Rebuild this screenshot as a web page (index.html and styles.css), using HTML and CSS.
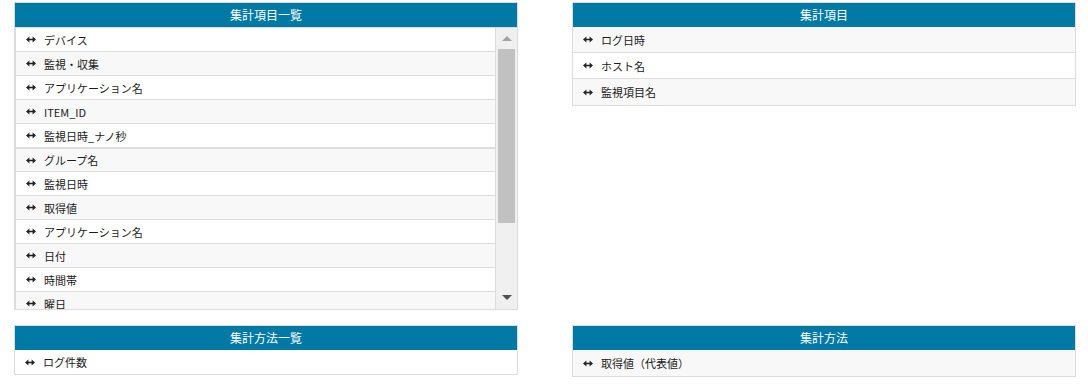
FILE: index.html
```html
<!DOCTYPE html>
<html lang="ja">
<head>
  <meta charset="UTF-8" />
  <title>集計設定</title>
  <link rel="stylesheet" href="styles.css">
</head>
<body>

  <div class="board">

    <!-- 集計項目一覧 -->
    <div class="panel">
      <div class="panel-head head-line">集計項目一覧</div>
      <div class="scroll-box">
        <ul class="item-list list-even">
          <li class="item"><span class="arrow"></span>デバイス</li>
          <li class="item"><span class="arrow"></span>監視・収集</li>
          <li class="item"><span class="arrow"></span>アプリケーション名</li>
          <li class="item"><span class="arrow"></span>ITEM_ID</li>
          <li class="item"><span class="arrow"></span>監視日時_ナノ秒</li>
          <li class="item sep"><span class="arrow"></span>グループ名</li>
          <li class="item"><span class="arrow"></span>監視日時</li>
          <li class="item"><span class="arrow"></span>取得値</li>
          <li class="item"><span class="arrow"></span>アプリケーション名</li>
          <li class="item"><span class="arrow"></span>日付</li>
          <li class="item"><span class="arrow"></span>時間帯</li>
          <li class="item"><span class="arrow"></span>曜日</li>
        </ul>
        <div class="scrollbar">
          <div class="sb-btn"><span class="sb-up"></span></div>
          <div class="sb-track"><div class="sb-thumb"></div></div>
          <div class="sb-btn sb-btn-down"><span class="sb-down"></span></div>
        </div>
      </div>
    </div>

    <!-- 集計項目 -->
    <div class="panel">
      <div class="panel-head">集計項目</div>
      <ul class="item-list list-odd tall">
        <li class="item"><span class="arrow"></span>ログ日時</li>
        <li class="item"><span class="arrow"></span>ホスト名</li>
        <li class="item"><span class="arrow"></span>監視項目名</li>
      </ul>
    </div>

    <!-- 集計方法一覧 -->
    <div class="panel">
      <div class="panel-head">集計方法一覧</div>
      <ul class="item-list list-even">
        <li class="item"><span class="arrow"></span>ログ件数</li>
      </ul>
    </div>

    <!-- 集計方法 -->
    <div class="panel">
      <div class="panel-head">集計方法</div>
      <ul class="item-list list-odd tall">
        <li class="item"><span class="arrow"></span>取得値（代表値）</li>
      </ul>
    </div>

  </div>

  <svg class="defs" width="0" height="0">
    <defs>
      <symbol id="lr" viewBox="0 0 10 7">
        <path d="M0 3.5 L3.4 0.4 V2.8 H6.6 V0.4 L10 3.5 L6.6 6.6 V4.2 H3.4 V6.6 Z" fill="#222"/>
      </symbol>
    </defs>
  </svg>

  <script>
    // 矢印アイコンを各行に入れる
    document.querySelectorAll('.arrow').forEach(el => {
      el.innerHTML = '<svg width="10" height="7"><use href="#lr"/></svg>';
    });
  </script>

</body>
</html>
```

FILE: styles.css
```css
body {
  margin: 0;
  padding: 2px 12px 0 14px;
  font-family: 'Noto Sans CJK JP', 'Noto Sans', sans-serif;
  background-color: #ffffff;
  color: #333;
}
.defs {
  display: block;
  height: 0;
}
.board {
  display: grid;
  grid-template-columns: 504px 504px;
  column-gap: 54px;
  row-gap: 15px;
  align-items: start;
}
.panel {
  border: 1px solid #dcdcdc;
  background: #fff;
}
.panel-head {
  height: 24px;
  line-height: 24px;
  background-color: #0079a5;
  color: #fff;
  text-align: center;
  font-size: 12px;
}
.head-line {
  border-bottom: 1px solid #dcdcdc;
}
.item-list {
  list-style: none;
  margin: 0;
  padding: 0;
}
.item {
  display: flex;
  align-items: center;
  height: 24px;
  box-sizing: border-box;
  border-bottom: 1px solid #dcdcdc;
  padding-left: 10px;
  font-size: 11px;
  color: #1a1a1a;
  background: #fff;
}
.item:last-child {
  border-bottom: 0;
}
.tall .item {
  height: 26px;
  padding-left: 10px;
}
.list-even .item:nth-child(even) {
  background: #f8f8f8;
}
.list-odd .item:nth-child(odd) {
  background: #f8f8f8;
}
.item.sep {
  border-top: 1px solid #dcdcdc;
}
.arrow {
  display: inline-flex;
  width: 10px;
  height: 7px;
  margin-right: 8px;
}
.arrow svg {
  display: block;
}

/* スクロール付きリスト */
.scroll-box {
  display: flex;
  height: 281px;
}
.scroll-box .item-list {
  flex: 1;
  overflow: hidden;
  border-left: 1px solid #dcdcdc;
  border-right: 1px solid #dcdcdc;
}
.scroll-box .item:last-child {
  border-bottom: 1px solid #dcdcdc;
}
.scrollbar {
  width: 21px;
  display: flex;
  flex-direction: column;
  background: #f0f0f0;
}
.sb-btn {
  height: 21px;
  display: flex;
  justify-content: center;
  align-items: center;
}
.sb-btn-down {
  height: 23px;
}
.sb-up {
  width: 0;
  height: 0;
  border-left: 5px solid transparent;
  border-right: 5px solid transparent;
  border-bottom: 5px solid #a3a3a3;
}
.sb-down {
  width: 0;
  height: 0;
  border-left: 5px solid transparent;
  border-right: 5px solid transparent;
  border-top: 5px solid #505050;
}
.sb-track {
  flex: 1;
}
.sb-thumb {
  height: 174px;
  margin: 0 2px 0 2px;
  background: #c1c1c1;
}
```
